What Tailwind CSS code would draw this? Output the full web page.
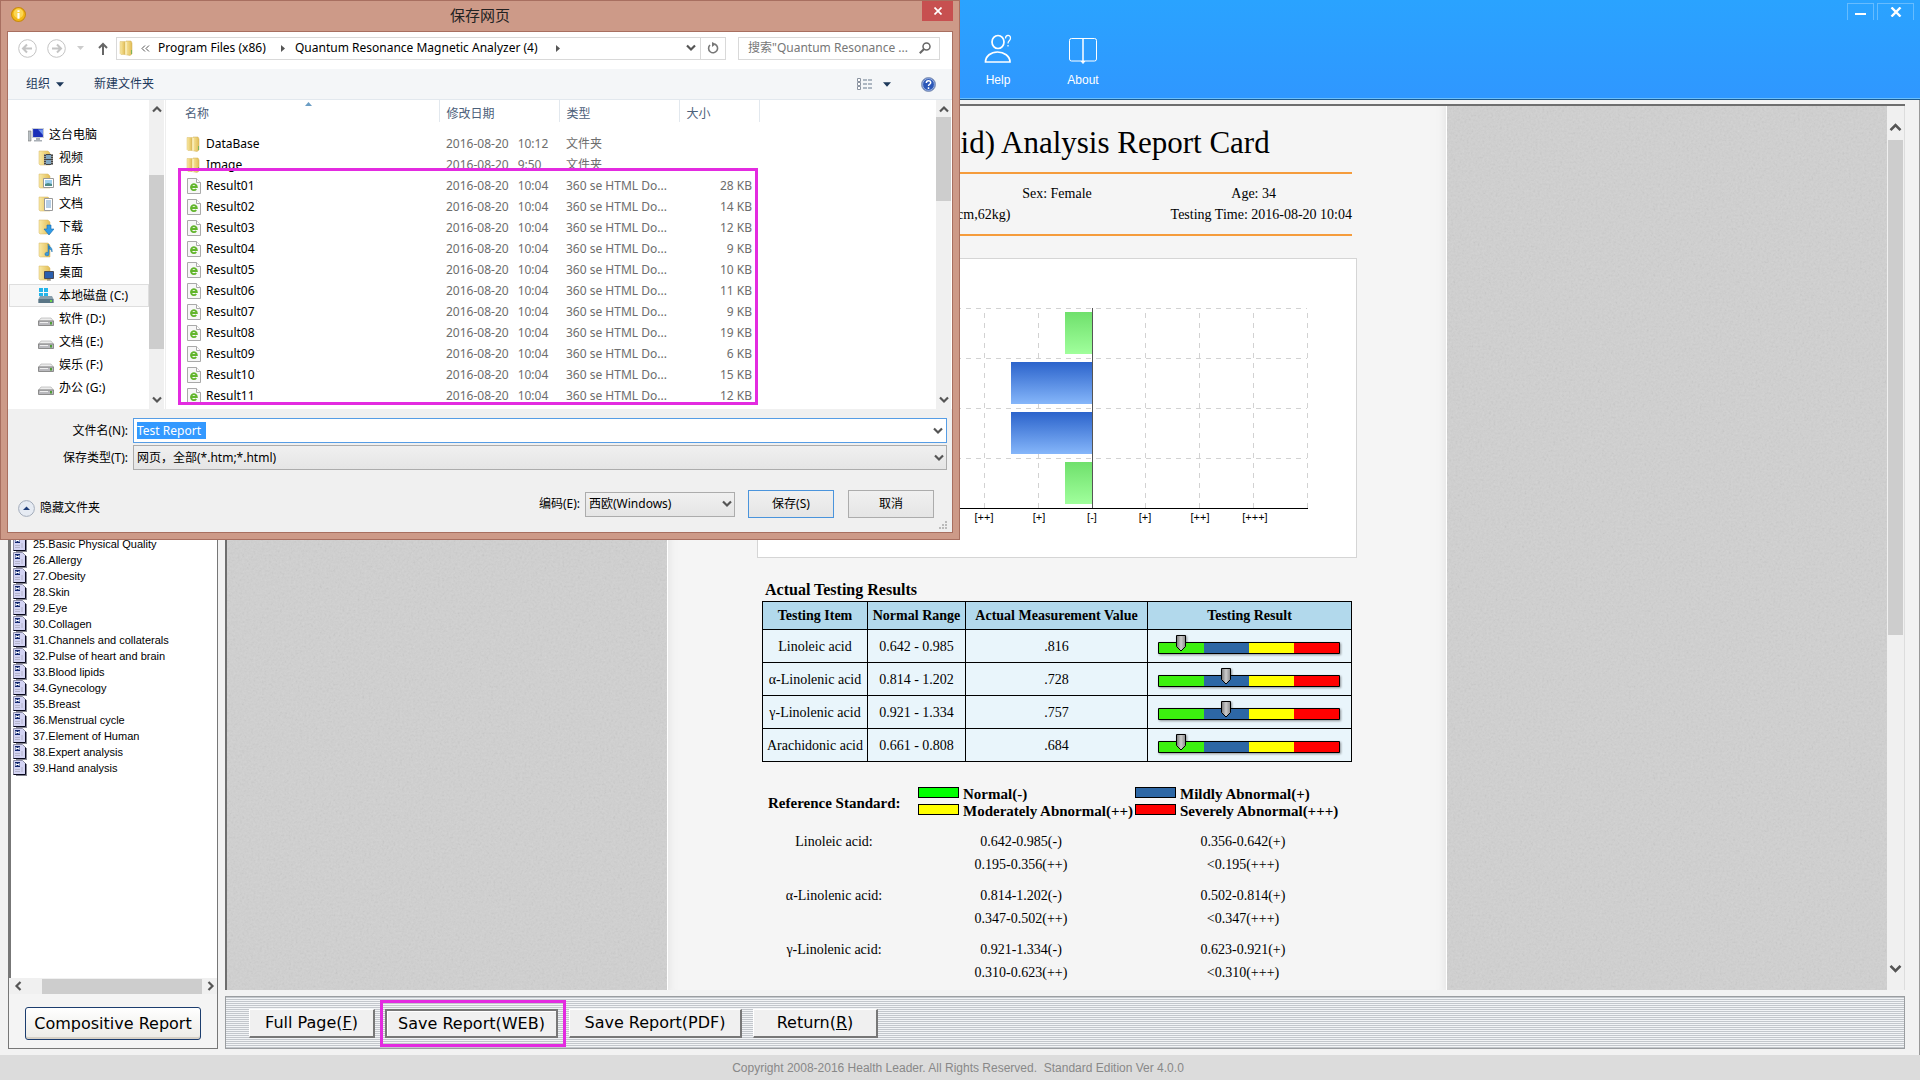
<!DOCTYPE html>
<html lang="en">
<head>
    <meta charset="UTF-8">
    <meta name="viewport" content="width=device-width, initial-scale=1.0">
    <title>Analysis Report Card</title>
    <script src="https://cdn.jsdelivr.net/npm/@tailwindcss/browser@4"></script>
</head>
<body class="bg-[#f2f2f2] text-black">

    <!-- shared icons -->
    <svg class="absolute h-0 w-0">
        <defs>
            <linearGradient id="gold" x1="0" x2="1"><stop offset="0" stop-color="#f9eaa6"/><stop offset="1" stop-color="#e2bd55"/></linearGradient>
            <linearGradient id="green" x1="0" x2="0" y1="0" y2="1"><stop offset="0" stop-color="#6fe06c"/><stop offset="1" stop-color="#a0ff9c"/></linearGradient>
            <linearGradient id="blue" x1="0" x2="0" y1="0" y2="1"><stop offset="0" stop-color="#2b63cb"/><stop offset="1" stop-color="#85b6fa"/></linearGradient>
            <linearGradient id="steel" x1="0" x2="1"><stop offset="0" stop-color="#777"/><stop offset=".5" stop-color="#ccc"/><stop offset="1" stop-color="#888"/></linearGradient>
        </defs>
        <symbol id="up" viewBox="0 0 10 8"><path d="M1 6.500 5 2.500 9 6.500" fill="none" stroke="#555" stroke-width="2.200"/></symbol>
        <symbol id="down" viewBox="0 0 10 8"><path d="M1 1.500 5 5.500 9 1.500" fill="none" stroke="#555" stroke-width="2.200"/></symbol>
        <symbol id="folder" viewBox="0 0 16 16"><path d="M1 1.500h5v13H2l-1-1z" fill="url(#gold)" stroke="#dcc070" stroke-width=".5"/><path d="M6 3l1-2h5l1 2v11l-2 1.500L6 14.500z" fill="url(#gold)" stroke="#cfae58" stroke-width=".5"/><path d="M7 2v13" stroke="#fff6cf"/><path d="M12.500 10v4" stroke="#7db35a"/></symbol>
        <symbol id="html" viewBox="0 0 16 16"><path d="M1.500.500h9l4 4v11h-13z" fill="#f7f7f7" stroke="#a9a9a9"/><path d="M10.500.500v4h4" fill="#fff" stroke="#a9a9a9"/><path d="M5.200 9h5.600A2.900 3 0 1 0 10.200 11" fill="none" stroke="#62b52c" stroke-width="1.900"/></symbol>
        <symbol id="film" viewBox="0 0 16 16"><path d="M1 1h9l2 2v12H2l-1-1z" fill="url(#gold)" stroke="#d4b766" stroke-width=".5"/><path d="M6 4h9v11H6z" fill="#444"/><path d="M8 5h5v4H8zM8 10h5v4H8z" fill="#7fa6c2"/><path d="M7 4v11M14 4v11" stroke="#ddd" stroke-dasharray="1 1"/></symbol>
        <symbol id="photo" viewBox="0 0 16 16"><path d="M1 1h9l2 2v12H2l-1-1z" fill="url(#gold)" stroke="#d4b766" stroke-width=".5"/><path d="M5.500 5.500h10v9h-10z" fill="#fff" stroke="#999"/><path d="M7 7h7v6H7z" fill="#9ed0ef"/><path d="M7 13v-2l3-1 4 1v2z" fill="#4d8b87"/></symbol>
        <symbol id="doc" viewBox="0 0 16 16"><path d="M1 1h9l2 2v12H2l-1-1z" fill="url(#gold)" stroke="#d4b766" stroke-width=".5"/><path d="M6.500 2.500h8v12h-8z" fill="#fff" stroke="#999"/><path d="M8 5h5M8 7h5M8 9h5M8 11h5" stroke="#6d9dcb"/></symbol>
        <symbol id="download" viewBox="0 0 16 16"><path d="M1 1h9l2 2v12H2l-1-1z" fill="url(#gold)" stroke="#d4b766" stroke-width=".5"/><path d="M9 6h4v4h3l-5 6-5-6h3z" fill="#2f9be6" stroke="#1a6cae" stroke-width=".6"/></symbol>
        <symbol id="music" viewBox="0 0 16 16"><path d="M1 1h9l2 2v12H2l-1-1z" fill="url(#gold)" stroke="#d4b766" stroke-width=".5"/><path d="M11 4v8a2 1.800 0 1 1-1-1.500V2c1 3 5 3 4 8-.5-2-1.500-3-3-3z" fill="#3c9ad8" stroke="#1d6da8" stroke-width=".5"/></symbol>
        <symbol id="desktop" viewBox="0 0 16 16"><path d="M1 1h9l2 2v12H2l-1-1z" fill="url(#gold)" stroke="#d4b766" stroke-width=".5"/><path d="M6.500 6.500h9v7h-9z" fill="#2a5fae" stroke="#4a4a55"/><path d="M9 15h4" stroke="#777"/></symbol>
        <symbol id="system" viewBox="0 0 16 16"><path d="M1 0h4v4H1zM6 0h4v4H6zM1 5h4v3H1zM6 5h4v3H6z" fill="#22b4ea"/><path d="M2 8h12l1.500 3v4H.500v-4z" fill="#8aa0ad"/><path d="M.500 11h15v4H.500z" fill="#5a7686"/><path d="M12 12h2v2h-2z" fill="#6fd64c"/></symbol>
        <symbol id="drive" viewBox="0 0 16 16"><path d="M3 7h10l2.500 3H.500z" fill="#ececec" stroke="#aaa" stroke-width=".6"/><path d="M.500 10h15v4.500H.500z" fill="#b9b9bd" stroke="#777" stroke-width=".8"/><path d="M2 11.500h8" stroke="#eee"/><path d="M12 11h2v2.500h-2z" fill="#4f9e38"/></symbol>
        <symbol id="pc" viewBox="0 0 16 16"><path d="M0 4h3v10H0z" fill="#b9c0c4" stroke="#777" stroke-width=".6"/><path d="M4.500 1.500h11v9h-11z" fill="#1a2fb8" stroke="#c9ced6" stroke-width="1.200"/><path d="M10 2.500h5V8z" fill="#6f93f0"/><path d="M8 11h4v2h2v1.500H6V13h2z" fill="#a9afb6"/></symbol>
        <symbol id="page" viewBox="0 0 14 16"><path d="M12 4h2v12H3v-1h9z" fill="#85858f"/><path d="M.500.500h9l3 3v11H.500z" fill="#d4d4f4" stroke="#8c8ca4"/><path d="M12.500 3.500v11H.500" fill="none" stroke="#08081c"/><path d="M2 2h5v5H2z" fill="#10256e"/><path d="M3 3v3M6 3v3M3 4.500h3" stroke="#fff"/><path d="M2 9.500h5M2 11.500h5M9 7v5" stroke="#b4b4ca"/></symbol>
    </svg>

    <div class="relative flex h-screen flex-col font-['Liberation_Sans',sans-serif]">

        <!-- header -->
        <header class="flex h-[100px] shrink-0 justify-between border-b border-[#1c5c90] bg-linear-to-b from-[#2aa3ff] to-[#2f97ff] shadow-[inset_0_-1px_0_#6cc0fb]">
            <nav class="ml-[960px] flex pt-[34px] text-xs text-white">
                <a href="#" class="flex w-19 flex-col items-center gap-2">
                    <svg class="h-[30px] w-[30px]" viewBox="0 0 30 30" fill="none" stroke="#fff">
                        <ellipse cx="15" cy="8" rx="6" ry="6.500" stroke-width="1.700"/>
                        <path d="M2.500 28c0-6 5.500-10 12-10s12.500 4 12.500 10z" stroke-width="1.700"/>
                        <path d="M22.500 4.500c0-4 5-4 5-.5 0 3-2.500 2.500-2.500 5.500M25 11v1.500" stroke-width="1.200"/>
                    </svg>
                    <span class="leading-4">Help</span>
                </a>
                <a href="#" class="ml-[9px] flex w-19 flex-col items-center gap-2">
                    <svg class="h-[30px] w-[30px]" viewBox="0 0 30 30" fill="none" stroke="#fff">
                        <rect x="1.500" y="4.500" width="27" height="22.500" rx="2"/>
                        <path d="M15 5v23" stroke-width="1.500"/><path d="m13 27 2 2.500 2-2.500" fill="#fff"/>
                    </svg>
                    <span class="leading-4">About</span>
                </a>
            </nav>
            <div class="mr-[6px] flex gap-[3px] pt-[3px]">
                <button aria-label="Minimize" class="flex h-[17px] w-[27px] items-center justify-center border-x border-t border-[#66bcff]"><span class="mt-1 h-[2px] w-[11px] bg-white"></span></button>
                <button aria-label="Close" class="flex h-[17px] w-[37px] items-center justify-center border-x border-t border-[#66bcff]">
                    <svg class="h-[10px] w-[12px]" viewBox="0 0 12 10"><path d="m1.500.500 9 9m0-9-9 9" stroke="#fff" stroke-width="2.400"/></svg>
                </button>
            </div>
        </header>

        <!-- workspace -->
        <div class="flex min-h-0 flex-1 gap-[7px] border-r border-[#999] pt-1 pr-[14px] pb-[6px] pl-2">

            <!-- report tree -->
            <aside class="flex w-[210px] shrink-0 flex-col border border-[#777] bg-[#f4f4f4]">
                <div class="flex min-h-0 flex-1 flex-col border-l-2 border-[#777] bg-white pt-[431px]">
                    <ul id="tree" class="text-[11px]"></ul>
                </div>
                <div class="flex h-[16px] items-center gap-2 bg-[#f0f0f0] pr-[1px] pl-1">
                    <svg class="h-2 w-[10px] -rotate-90"><use href="#up"/></svg>
                    <span class="ml-[11px] h-[15px] flex-1 bg-[#cdcdcd]"></span>
                    <svg class="-ml-1 h-2 w-[10px] rotate-90"><use href="#up"/></svg>
                </div>
                <div class="px-4 pt-[13px] pb-2">
                    <button class="h-[33px] w-full rounded-[3px] border border-[#1c3d6e] bg-linear-to-b from-white to-[#ecebe6] font-['DejaVu_Sans',sans-serif] text-base leading-none whitespace-nowrap shadow-[inset_0_-2px_0_#d6d0c5]">Compositive Report</button>
                </div>
            </aside>

            <div class="flex min-w-0 flex-1 flex-col gap-[6px]">
                <!-- report view -->
                <div class="flex min-h-0 flex-1 border-t-2 border-l-2 border-[#6e6e6e]">
                    <div class="relative flex min-w-0 flex-1 justify-center overflow-hidden bg-[#d1d1d1]">
                        <svg class="absolute inset-0 h-full w-full opacity-20">
                            <filter id="grain"><feTurbulence type="fractalNoise" baseFrequency=".45" numOctaves="3"/><feColorMatrix type="saturate" values="0"/></filter>
                            <rect width="100%" height="100%" filter="url(#grain)"/>
                        </svg>
                        <article class="relative h-full w-[780px] overflow-hidden border-x border-white bg-[#f5f5f5] px-[89px] font-['Liberation_Serif',serif] text-sm leading-[21px] shadow-[inset_10px_0_8px_-8px_#e6e6e6,inset_-10px_0_8px_-8px_#e6e6e6]">
                            <div class="px-[5px]">
                                <h1 class="pt-4 text-center text-[31px] leading-[42px]">(Fatty Acid) Analysis Report Card</h1>
                                <div class="mt-2 grid h-[64px] grid-cols-3 content-center border-y-2 border-[#f59c3c] text-center">
                                    <span></span><span>Sex: Female</span><span>Age: 34</span>
                                    <span class="col-span-2 pr-[145px] text-right whitespace-nowrap">cm,62kg)</span><span class="text-right">Testing Time: 2016-08-20 10:04</span>
                                </div>
                            </div>

                            <svg class="mt-[22px] h-[300px] w-[600px] border border-[#d5d5d5] bg-white" viewBox="0 0 598 298" font-family="Liberation Sans, sans-serif" font-size="11" text-anchor="middle">
                                <g stroke="#d2d2d2" stroke-dasharray="5 5">
                                    <path d="M8 49.500h541M8 99.500h541M8 149.500h541M8 199.500h541"/>
                                    <path d="M172.500 54v195M226.500 54v195M280.500 54v195M387.500 54v195M441.500 54v195M495.500 54v195M549.500 54v195"/>
                                </g>
                                <path d="M307 53h27v42h-27z" fill="url(#green)"/>
                                <path d="M307 203h27v42h-27z" fill="url(#green)"/>
                                <path d="M253 103h81v42h-81z" fill="url(#blue)"/>
                                <path d="M253 153h81v42h-81z" fill="url(#blue)"/>
                                <path d="M334.500 49v200" stroke="#555"/>
                                <path d="M8 249.500h542" stroke="#000"/>
                                <text x="172" y="262">[+++]</text><text x="226" y="262">[++]</text><text x="281" y="262">[+]</text><text x="334" y="262">[-]</text>
                                <text x="387" y="262">[+]</text><text x="442" y="262">[++]</text><text x="497" y="262">[+++]</text>
                            </svg>

                            <div class="px-[5px]">
                                <h2 class="mt-5 pl-[3px] text-base leading-[23px] font-bold">Actual Testing Results</h2>
                                <table class="w-full table-fixed border-collapse border border-black bg-[#e9f5fb] text-center whitespace-nowrap">
                                    <colgroup><col class="w-[105px]"><col class="w-[98px]"><col class="w-[182px]"><col></colgroup>
                                    <thead>
                                        <tr class="h-[28px] bg-[#b2d9ec]">
                                            <th class="border border-black">Testing Item</th><th class="border border-black">Normal Range</th><th class="border border-black">Actual Measurement Value</th><th class="border border-black">Testing Result</th>
                                        </tr>
                                    </thead>
                                    <tbody id="results"></tbody>
                                </table>

                                <div class="mt-[24px] flex items-center pl-[6px] text-[15px] leading-[17px] font-bold whitespace-nowrap">
                                    <span class="w-[150px]">Reference Standard:</span>
                                    <div class="grid grid-cols-[217px_auto]">
                                        <span class="flex gap-1"><i class="mt-[1px] h-[11px] w-[41px] border border-black bg-[#00ff00]"></i>Normal(-)</span>
                                        <span class="flex gap-1"><i class="mt-[1px] h-[11px] w-[41px] border border-black bg-[#2d67a5]"></i>Mildly Abnormal(+)</span>
                                        <span class="flex gap-1"><i class="mt-[1px] h-[11px] w-[41px] border border-black bg-[#ffff00]"></i>Moderately Abnormal(++)</span>
                                        <span class="flex gap-1"><i class="mt-[1px] h-[11px] w-[41px] border border-black bg-[#ff0000]"></i>Severely Abnormal(+++)</span>
                                    </div>
                                </div>
                                <div id="standards" class="mt-[10px] text-center leading-[23px]"></div>
                            </div>
                        </article>
                    </div>
                    <!-- page scroll bar -->
                    <div class="flex w-[18px] shrink-0 flex-col items-center border-r border-[#ddd] bg-[#f0f0f0] pb-4">
                        <svg class="mt-4 h-[10px] w-[13px]" viewBox="0 0 10 8"><use href="#up"/></svg>
                        <span class="mt-[8px] h-[495px] w-[15px] bg-[#cdcdcd]"></span>
                        <svg class="mt-auto h-[10px] w-[13px]" viewBox="0 0 10 8"><use href="#down"/></svg>
                    </div>
                </div>

                <!-- actions -->
                <div class="flex h-[53px] shrink-0 items-center border border-[#9a9da0] bg-[repeating-linear-gradient(#c3c7cc_0_1px,#f2f4f6_1px_2px)] pt-[2px] pl-[23px] font-['DejaVu_Sans',sans-serif] text-base whitespace-nowrap">
                    <button class="h-[29px] w-[126px] border-t border-r-2 border-b-2 border-l border-t-white border-r-[#777] border-b-[#777] border-l-white bg-[#f0f0f0] leading-none">Full Page(<u>F</u>)</button>
                    <span class="ml-[5px] flex h-[47px] w-[186px] items-center border-3 border-[#e32be0] pl-[2px]">
                        <button class="h-[29px] w-[173px] border-2 border-[#777] bg-[#f0f0f0] leading-none shadow-[inset_1px_1px_0_#fff]">Save Report(WEB)</button>
                    </span>
                    <button class="ml-[3px] h-[29px] w-[173px] border-t border-r-2 border-b-2 border-l border-t-white border-r-[#777] border-b-[#777] border-l-white bg-[#f0f0f0] leading-none">Save Report(PDF)</button>
                    <button class="ml-[11px] h-[29px] w-[125px] border-t border-r-2 border-b-2 border-l border-t-white border-r-[#777] border-b-[#777] border-l-white bg-[#f0f0f0] leading-none">Return(<u>R</u>)</button>
                </div>
            </div>
        </div>

        <footer class="flex h-[25px] shrink-0 items-center justify-center bg-[#dcdcdc] pr-1 text-xs whitespace-pre text-[#888]">Copyright 2008-2016 Health Leader. All Rights Reserved.  Standard Edition Ver 4.0.0</footer>

        <!-- save dialog -->
        <section class="absolute top-0 left-0 w-1/2 border border-[#a86f60] bg-[#cd9a88] px-[6px] pb-[6px] font-['Noto_Sans','Noto_Sans_CJK_SC',sans-serif] text-xs">
            <div class="flex h-[30px] items-start">
                <svg class="mt-[6px] ml-1 h-[15px] w-[15px]" viewBox="0 0 14 14"><circle cx="7" cy="7" r="6.500" fill="#f3b818" stroke="#c98a10"/><circle cx="7" cy="6" r="4.500" fill="#fbd654"/><path d="M7 3v1.600M7 5.500V11" stroke="#fff" stroke-width="2"/></svg>
                <h2 class="flex-1 pl-3 text-center text-[15px] leading-[28px] text-[#222]">保存网页</h2>
                <button aria-label="Close" class="flex h-5 w-[31px] items-center justify-center bg-[#c75050]"><svg class="h-2 w-2" viewBox="0 0 8 8"><path d="m.500.500 7 7m0-7-7 7" stroke="#fff" stroke-width="1.700"/></svg></button>
            </div>

            <div class="border border-[#a86f60] bg-white">
                <!-- address row -->
                <div class="flex h-[37px] items-center pr-3 pb-[5px] pl-[10px]">
                    <button aria-label="Back"><svg class="h-[19px] w-[19px]" viewBox="0 0 19 19" fill="none" stroke="#c4c4c4"><circle cx="9.500" cy="9.500" r="8.800"/><path d="M14 9.500H5.500M9 5.500l-4 4 4 4" stroke-width="2"/></svg></button>
                    <button aria-label="Forward" class="ml-[10px]"><svg class="h-[19px] w-[19px]" viewBox="0 0 19 19" fill="none" stroke="#c4c4c4"><circle cx="9.500" cy="9.500" r="8.800"/><path d="M5 9.500h8.500M10 5.500l4 4-4 4" stroke-width="2"/></svg></button>
                    <svg class="ml-[11px] h-1 w-[7px]" viewBox="0 0 7 4"><path d="M0 0h7L3.500 4z" fill="#ccc"/></svg>
                    <button aria-label="Up" class="ml-[14px]"><svg class="h-[13px] w-[10px]" viewBox="0 0 10 13"><path d="M5 13V2M1 6l4-4 4 4" fill="none" stroke="#666" stroke-width="2"/></svg></button>
                    <div class="ml-2 flex h-[23px] flex-1 items-center border border-[#d9d9d9] pl-[2px] whitespace-nowrap">
                        <svg class="h-4 w-4"><use href="#folder"/></svg>
                        <svg class="ml-[6px] h-[7px] w-[9px]" viewBox="0 0 9 7"><path d="M4 .500 1 3.500l3 3M8 .500 5 3.500l3 3" fill="none" stroke="#555"/></svg>
                        <span class="ml-[8px] w-[112px]">Program Files (x86)</span>
                        <svg class="ml-[11px] h-[7px] w-1" viewBox="0 0 4 7"><path d="M0 0v7l4-3.500z" fill="#555"/></svg>
                        <span class="ml-[10px] w-[250px]">Quantum Resonance Magnetic Analyzer (4)</span>
                        <svg class="ml-[11px] h-[7px] w-1" viewBox="0 0 4 7"><path d="M0 0v7l4-3.500z" fill="#555"/></svg>
                        <svg class="mr-1 ml-auto h-2 w-[10px]"><use href="#down"/></svg>
                        <button aria-label="Refresh" class="flex h-full w-[25px] items-center justify-center border-l border-[#d9d9d9]"><svg class="h-3 w-3" viewBox="0 0 12 12"><path d="M8 2.200A4.500 4.500 0 1 1 3 3" fill="none" stroke="#777" stroke-width="1.600"/><path d="M5 0v5l4-3z" fill="#777"/></svg></button>
                    </div>
                    <div class="ml-3 flex h-[23px] w-[202px] items-center justify-between border border-[#d9d9d9] pr-2 pl-[9px]">
                        <input aria-label="Search" class="w-[166px] outline-none placeholder:text-[#777]" placeholder='搜索"Quantum Resonance ...'>
                        <svg class="h-3 w-3" viewBox="0 0 12 12" fill="none" stroke="#666"><circle cx="7.500" cy="4.500" r="3.500" stroke-width="1.500"/><path d="M5 7 .800 11.200" stroke-width="2"/></svg>
                    </div>
                </div>

                <!-- command bar -->
                <div class="flex h-[31px] items-center border-b border-[#e2e8ee] bg-[#f4f6f8] pr-4 pl-[18px] text-[#1e395b]">
                    <button class="flex items-center gap-[6px]">组织<svg class="h-[5px] w-2" viewBox="0 0 7 4"><path d="M0 0h7L3.500 4z" fill="#1e395b"/></svg></button>
                    <button class="ml-[30px]">新建文件夹</button>
                    <button aria-label="View" class="ml-auto flex items-center gap-[11px]">
                        <svg class="h-[13px] w-[15px]" viewBox="0 0 15 13"><path d="M.500.500h3v3h-3zM.500 4.500h3v3h-3zM.500 8.500h3v3h-3z" fill="#fff" stroke="#8a93a0"/><path d="M6 2h4m1 0h4M6 6h4m1 0h4M6 10h4m1 0h4" stroke="#66788c"/></svg>
                        <svg class="h-[5px] w-2" viewBox="0 0 7 4"><path d="M0 0h7L3.500 4z" fill="#1e395b"/></svg>
                    </button>
                    <button aria-label="Help" class="ml-[30px]"><svg class="h-[15px] w-[15px]" viewBox="0 0 15 15"><circle cx="7.500" cy="7.500" r="7" fill="#2b57b8" stroke="#8f9db8"/><circle cx="7.500" cy="7.500" r="5.900" fill="none" stroke="#c7d5ee" stroke-width=".7"/><path d="M5.300 6c0-3 4.400-3 4.400-.3 0 1.600-2.200 1.500-2.200 3.300M7.500 10.300v1.600" fill="none" stroke="#fff" stroke-width="1.500"/></svg></button>
                </div>

                <!-- folders and files -->
                <div class="flex h-[309px]">
                    <ul id="folders" class="w-[141px] pt-[23px] pl-[1px]"></ul>
                    <div class="flex w-[15px] flex-col items-center bg-[#f0f0f0] py-[5px]">
                        <svg class="h-2 w-[10px]"><use href="#up"/></svg>
                        <span class="mt-[62px] h-[174px] w-full bg-[#cdcdcd]"></span>
                        <svg class="mt-auto h-2 w-[10px]"><use href="#down"/></svg>
                    </div>
                    <div class="relative ml-[1px] flex-1 overflow-hidden border-l border-[#eee]">
                        <table class="w-[593px] table-fixed border-collapse text-left whitespace-nowrap">
                            <colgroup><col class="w-[273px]"><col class="w-[120px]"><col class="w-[120px]"><col class="w-[80px]"></colgroup>
                            <thead>
                                <tr class="h-[22px] text-[#4c607a]">
                                    <th class="border-r border-[#e2e8ee] pt-[6px] pl-[19px] font-normal">名称</th>
                                    <th class="border-r border-[#e2e8ee] pt-[6px] pl-[7px] font-normal">修改日期</th>
                                    <th class="border-r border-[#e2e8ee] pt-[6px] pl-[7px] font-normal">类型</th>
                                    <th class="border-r border-[#e2e8ee] pt-[6px] pl-[7px] font-normal">大小</th>
                                </tr>
                                <tr class="h-[11px]"><td colspan="4"></td></tr>
                            </thead>
                            <tbody id="files"></tbody>
                        </table>
                        <svg class="absolute top-[2px] left-[139px] h-1 w-[7px]" viewBox="0 0 7 4"><path d="M0 4h7L3.500 0z" fill="#6a9dc4"/></svg>
                        <!-- highlighted result files -->
                        <div class="absolute top-[68px] left-3 h-[237px] w-[580px] border-3 border-[#e32be0]"></div>
                    </div>
                    <div class="mr-[1px] flex w-[15px] flex-col items-center bg-[#f0f0f0] py-[5px]">
                        <svg class="h-2 w-[10px]"><use href="#up"/></svg>
                        <span class="mt-1 h-[84px] w-full bg-[#cdcdcd]"></span>
                        <svg class="mt-auto h-2 w-[10px]"><use href="#down"/></svg>
                    </div>
                </div>

                <!-- name, type and buttons -->
                <div class="h-[123px] bg-[#f0f0f0] pt-[9px] pr-[5px]">
                    <div class="grid grid-cols-[120px_1fr] items-center gap-x-[5px] gap-y-[2px]">
                        <label for="filename" class="text-right">文件名(N):</label>
                        <div class="relative flex h-[25px] items-center border border-[#569de5] bg-white pl-[3px]">
                            <input id="filename" value="Test Report" class="h-[17px] w-[69px] bg-[#3399ff] text-white outline-none">
                            <svg class="absolute right-[3px] h-2 w-[10px]"><use href="#down"/></svg>
                        </div>
                        <label for="filetype" class="text-right">保存类型(T):</label>
                        <div class="relative flex items-center">
                            <select id="filetype" class="h-[25px] w-full appearance-none border border-[#acacac] bg-linear-to-b from-[#f0f0f0] to-[#e5e5e5] pl-[3px]"><option>网页，全部(*.htm;*.html)</option></select>
                            <svg class="absolute right-[3px] h-2 w-[10px]"><use href="#down"/></svg>
                        </div>
                    </div>
                    <div class="mt-5 flex items-center pr-[13px] pl-[10px]">
                        <button class="flex items-center gap-[5px] pt-2">
                            <svg class="h-[17px] w-[17px]" viewBox="0 0 17 17"><circle cx="8.500" cy="8.500" r="7.900" fill="#e6ebf3" stroke="#a3acba"/><path d="M5 10h7L8.500 6.500z" fill="#1e3c78"/></svg>隐藏文件夹
                        </button>
                        <label for="encoding" class="ml-auto">编码(E):</label>
                        <div class="relative ml-[5px] flex items-center">
                            <select id="encoding" class="h-[25px] w-[150px] appearance-none border border-[#acacac] bg-linear-to-b from-[#f0f0f0] to-[#e5e5e5] pl-[3px]"><option>西欧(Windows)</option></select>
                            <svg class="absolute right-[3px] h-2 w-[10px]"><use href="#down"/></svg>
                        </div>
                        <button class="ml-[13px] h-7 w-[86px] border border-[#4a94dc] bg-linear-to-b from-[#f0f0f0] to-[#e5e5e5]">保存(S)</button>
                        <button class="ml-[14px] h-7 w-[86px] border border-[#acacac] bg-linear-to-b from-[#f0f0f0] to-[#e5e5e5]">取消</button>
                    </div>
                    <svg class="mt-[3px] ml-auto h-2 w-2" viewBox="0 0 8 8"><path d="M6 0h2v2H6zM3 3h2v2H3zM6 3h2v2H6zM0 6h2v2H0zM3 6h2v2H3zM6 6h2v2H6z" fill="#bbb"/></svg>
                </div>
            </div>
        </section>
    </div>

    <script>
        let reports = ["25.Basic Physical Quality", "26.Allergy", "27.Obesity", "28.Skin", "29.Eye", "30.Collagen", "31.Channels and collaterals", "32.Pulse of heart and brain", "33.Blood lipids", "34.Gynecology", "35.Breast", "36.Menstrual cycle", "37.Element of Human", "38.Expert analysis", "39.Hand analysis"]

        document.querySelector("#tree").innerHTML = reports.map(name => `
            <li class="flex h-4 items-center gap-[6px] pl-[2px]"><svg class="h-4 w-[14px]"><use href="#page"/></svg>${name}</li>
        `).join("")

        let folders = [["film", "视频"], ["photo", "图片"], ["doc", "文档"], ["download", "下载"], ["music", "音乐"], ["desktop", "桌面"], ["system", "本地磁盘 (C:)"], ["drive", "软件 (D:)"], ["drive", "文档 (E:)"], ["drive", "娱乐 (F:)"], ["drive", "办公 (G:)"]]

        document.querySelector("#folders").innerHTML = `
            <li class="flex h-[23px] items-center gap-[5px] pl-[19px]"><svg class="h-4 w-4"><use href="#pc"/></svg>这台电脑</li>
        ` + folders.map(([icon, name]) => `
            <li class="flex h-[23px] items-center gap-[5px] border pl-[28px] ${icon == "system" ? "border-[#dedede] bg-[#f7f7f7]" : "border-transparent"}"><svg class="h-4 w-4"><use href="#${icon}"/></svg>${name}</li>
        `).join("")

        let sizes = [28, 14, 12, 9, 10, 11, 9, 19, 6, 15, 12]
        let files = [["folder", "DataBase", "10:12", "文件夹", ""], ["folder", "Image", "9:50", "文件夹", ""]]
        sizes.forEach((size, i) => files.push(["html", "Result" + String(i + 1).padStart(2, "0"), "10:04", "360 se HTML Do...", size + " KB"]))

        document.querySelector("#files").innerHTML = files.map(([icon, name, time, type, size]) => `
            <tr class="h-[21px] text-[#6d6d6d]">
                <td class="pl-[20px] text-black"><span class="flex items-center gap-1"><svg class="h-4 w-4"><use href="#${icon}"/></svg>${name}</span></td>
                <td class="pl-[7px]"><span class="flex gap-[9px]"><span>2016-08-20</span><span>${time}</span></span></td>
                <td class="pl-[7px]">${type}</td>
                <td class="pr-[7px] text-right">${size}</td>
            </tr>
        `).join("")

        // last value is the marker's position on the scale
        let results = [["Linoleic acid", "0.642 - 0.985", ".816", 23], ["α-Linolenic acid", "0.814 - 1.202", ".728", 68], ["γ-Linolenic acid", "0.921 - 1.334", ".757", 68], ["Arachidonic acid", "0.661 - 0.808", ".684", 23]]

        document.querySelector("#results").innerHTML = results.map(([item, range, value, x]) => `
            <tr class="h-[33px]">
                <td class="border border-black">${item}</td>
                <td class="border border-black">${range}</td>
                <td class="border border-black">${value}</td>
                <td class="border border-black pr-[2px]"><svg class="mx-auto h-[24px] w-[184px] drop-shadow-[1px_1px_1px_#0006]" viewBox="0 0 184 24">
                    <path d="M1 9h46v10H1z" fill="#3cf00f"/><path d="M47 9h45v10H47z" fill="#2d67a5"/><path d="M92 9h45v10H92z" fill="#ff0"/><path d="M137 9h46v10h-46z" fill="#f00"/>
                    <path d="M1.500 8.500h181v11H1.500z" fill="none" stroke="#000"/>
                    <path d="M${x - 4}.5 1.500h9v11l-4.500 4.500-4.500-4.500z" fill="url(#steel)" stroke="#000"/>
                </svg></td>
            </tr>
        `).join("")

        let standards = [["Linoleic acid:", "0.642-0.985(-)", "0.356-0.642(+)", "0.195-0.356(++)", "&lt;0.195(+++)"], ["α-Linolenic acid:", "0.814-1.202(-)", "0.502-0.814(+)", "0.347-0.502(++)", "&lt;0.347(+++)"], ["γ-Linolenic acid:", "0.921-1.334(-)", "0.623-0.921(+)", "0.310-0.623(++)", "&lt;0.310(+++)"]]

        document.querySelector("#standards").innerHTML = standards.map(([item, a, b, c, d]) => `
            <div class="mb-2 grid grid-cols-[144px_230px_214px]">
                <span>${item}</span><span>${a}</span><span>${b}</span>
                <span></span><span>${c}</span><span>${d}</span>
            </div>
        `).join("")
    </script>
</body>
</html>
